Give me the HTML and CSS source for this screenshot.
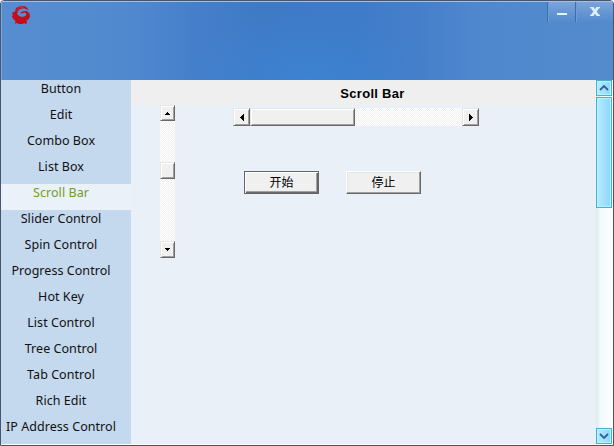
FILE: index.html
```
<!DOCTYPE html>
<html lang="en">
<head>
<meta charset="utf-8">
<title>Scroll Bar</title>
<link rel="stylesheet" href="styles.css">
</head>
<body>
<div class="window">
  <header class="banner">
    <svg class="logo" width="20" height="20" viewBox="0 0 20 20">
      <path fill="#c30d1b" d="M5 2 8 .6 13 0l3 1.500 1.500 2.500-1.500-.5L13 2.200 9 3 6.500 5.500 6.300 8 8 10l3 1 3.500-1 1-2-2-1.500-3 1L9 7l3-1.800L16 5l2.500 2.500.5 3-1.500 3-2 1L16 17l-1.500 1-1.500-1-1 1H7.500L6 17l-2 .7L4.500 15 2 12.500.5 9.500 2 10 1 6.500 3.500 6z"/>
      <path fill="none" stroke="#e0303b" stroke-width=".8" d="M4 5 8 1.800 13 1"/>
    </svg>
    <div class="caption">
      <span class="cap min"><i></i></span>
      <span class="cap close"><svg width="10" height="9" viewBox="0 0 10 9"><path d="M0 0h3.500L5 2.200 6.500 0H10v1.200H9L6.700 4.500 9 7.800h1V9H6.500L5 6.800 3.500 9H0V7.800h1l2.300-3.300L1 1.200H0z"/></svg></span>
    </div>
  </header>
  <div class="body">
    <nav class="menu">
      <a>Button</a>
      <a>Edit</a>
      <a>Combo Box</a>
      <a>List Box</a>
      <a class="active">Scroll Bar</a>
      <a>Slider Control</a>
      <a>Spin Control</a>
      <a>Progress Control</a>
      <a>Hot Key</a>
      <a>List Control</a>
      <a>Tree Control</a>
      <a>Tab Control</a>
      <a>Rich Edit</a>
      <a>IP Address Control</a>
    </nav>
    <main class="page">
      <h1>Scroll Bar</h1>
      <div class="demo">
        <div class="vbar">
          <span class="bevel end"><svg width="5" height="3"><path d="M2 0h1v1h1v1h1v1H0V2h1V1h1z"/></svg></span>
          <span class="bevel vthumb"></span>
          <span class="bevel end last"><svg width="5" height="3"><path d="M0 0h5v1H4v1H3v1H2V2H1V1H0z"/></svg></span>
        </div>
        <div class="right">
          <div class="hbar">
            <span class="bevel hend"><svg width="4" height="7"><path d="M3 0h1v7H3V6H2V5H1V4H0V3h1V2h1V1h1z"/></svg></span>
            <span class="bevel hthumb"></span>
            <span class="bevel hend last"><svg width="4" height="7"><path d="M0 0h1v1h1v1h1v1h1v1H3v1H2v1H1v1H0z"/></svg></span>
          </div>
          <div class="buttons">
            <button class="default">开始</button>
            <button>停止</button>
          </div>
        </div>
      </div>
    </main>
    <aside class="scroll">
      <span class="arrow"><svg width="10" height="6"><path d="m1 5 4-4 4 4"/></svg></span>
      <span class="thumb"></span>
      <span class="arrow last"><svg width="10" height="6"><path d="m1 1 4 4 4-4"/></svg></span>
    </aside>
  </div>
</div>
</body>
</html>
```
FILE: styles.css
```
* { box-sizing: border-box; }
body { margin: 0; background: #fff; }
svg { display: block; }
.window {
  width: 614px; height: 446px;
  display: flex; flex-direction: column;
  border: 1px solid #46546f;
  border-radius: 4px 4px 0 0;
  overflow: hidden;
}
.banner {
  height: 79px; flex: none;
  display: flex; justify-content: space-between;
  border-top: 1px solid #a3bfe6;
  border-left: 1px solid #7fa7dc;
  background:
    radial-gradient(ellipse 120px 65px at 50% 100%, rgba(58,136,214,.6), transparent),
    linear-gradient(90deg, #558dd0 0, #538bcf 14%, #4f88ce 22%, #457fcb 32%, #3f7ac7 42%, #3e7bc8 58%, #457fcb 68%, #4f88cd 78%, #538bcd 100%);
}
.logo { margin: 4px 0 0 9px; }
.caption { display: flex; height: 20px; }
.cap {
  display: flex; justify-content: center;
  border-left: 1px solid #3f6da9;
  box-shadow: inset 1px 0 #6d9dd9;
  background: linear-gradient(#7ba4d9, #6394d2 60%, #538bcd);
}
.min { width: 28px; }
.min i { width: 10px; height: 2px; margin-top: 11px; background: #e2f3fb; }
.close { width: 38px; }
.close svg { margin-top: 5px; fill: #d9effa; }
.body { display: flex; height: 365px; border-bottom: 1px solid #fff; }
.menu {
  width: 130px; flex: none; overflow: hidden;
  background: #c4d8ee;
  font: 12.5px/18px "Noto Sans", sans-serif;
  letter-spacing: .05px;
  color: #111;
}
.menu a { display: block; height: 26px; padding-right: 10px; text-align: center; white-space: nowrap; }
.menu .active { background: #eaf1f9; color: #739b29; }
.page { width: 465px; background: #e9f0f8; }
h1 {
  margin: 0; height: 25px; padding-left: 18px;
  background: #efefef; text-align: center;
  font: bold 13px/28px "Liberation Sans", Arial, sans-serif;
  letter-spacing: .3px; color: #000;
}
.demo { display: flex; padding-left: 29px; gap: 58px; }
.vbar, .hbar { display: flex; background: repeating-conic-gradient(#fff 0 25%, #f0f0f0 0 50%) 0 0 / 2px 2px; }
.vbar { flex-direction: column; width: 15px; height: 153px; }
.bevel {
  display: flex; align-items: center; justify-content: center;
  background: #f0f0f0;
  border: 1px solid; border-color: #e6e6e6 #696969 #696969 #e6e6e6;
  box-shadow: inset 1px 1px #fff, inset -1px -1px #a0a0a0;
}
.end { height: 16px; }
.vthumb { height: 17px; margin-top: 41px; }
.vbar .last { height: 17px; margin-top: auto; }
.right { padding-top: 3px; }
.hbar { width: 246px; height: 18px; }
.hend { width: 17px; }
.hthumb { width: 105px; }
.hbar .last { margin-left: auto; }
.buttons { display: flex; gap: 27px; padding: 45px 0 0 11px; }
button {
  width: 75px; height: 23px; padding: 0;
  background: #f0f0f0; color: #000;
  border: 1px solid; border-color: #fff #696969 #696969 #fff;
  box-shadow: inset -1px -1px #a0a0a0, inset 1px 1px #e6e6e6;
  font: 12px/20px "Liberation Sans", "Noto Sans CJK SC", sans-serif;
}
.default { border-color: #646464; box-shadow: inset 1px 1px #fff, inset -1px -1px #696969, inset -2px -2px #a0a0a0; }
.scroll {
  width: 17px; display: flex; flex-direction: column;
  background: linear-gradient(90deg, #dbe9ee, #f2fafc 25%, #fff);
}
.arrow, .thumb {
  width: 16px; flex: none;
  border: 1px solid #43b3d3;
  box-shadow: inset 0 0 0 1px #b9f2ff;
  background: linear-gradient(90deg, #b8ebff, #8cd6fb);
}
.arrow { height: 16px; display: flex; align-items: center; justify-content: center; }
.arrow path { fill: none; stroke: #27649a; stroke-width: 1.8; }
.thumb { height: 111px; margin-top: 1px; }
.scroll .last { margin-top: auto; }
```
